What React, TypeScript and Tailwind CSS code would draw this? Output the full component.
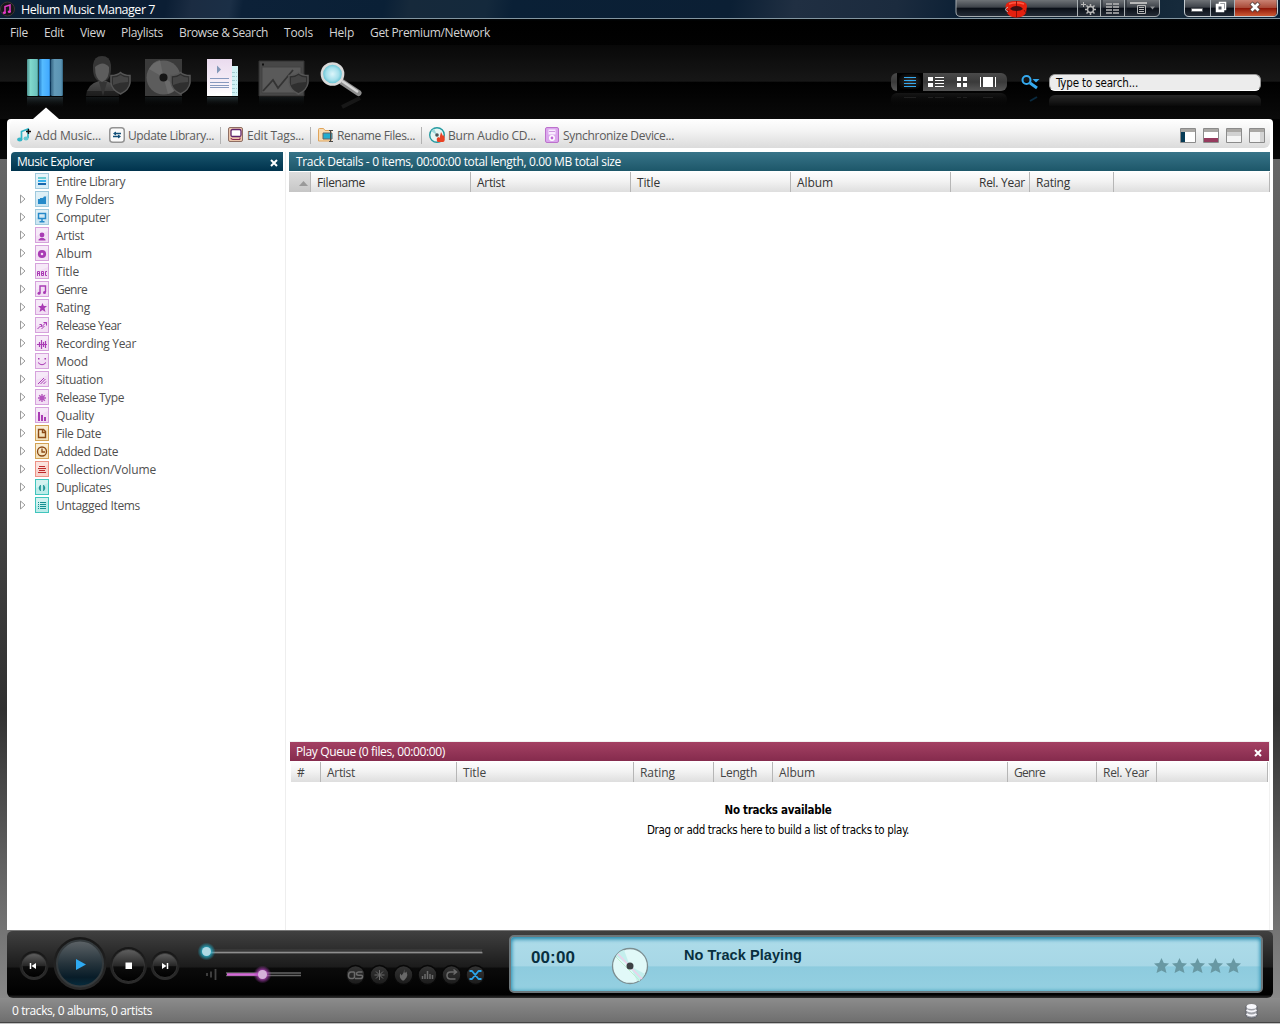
import React, { useLayoutEffect, useRef, useState } from "react";

/** Single-line label whose letter spacing is adjusted to occupy a given width. */
function Fit({ w, children, className = "" }: { w: number; children: string; className?: string }) {
  const ref = useRef<HTMLSpanElement>(null);
  const [ls, setLs] = useState(0);
  useLayoutEffect(() => {
    if (ref.current) {
      const natural = ref.current.getBoundingClientRect().width;
      setLs((w - natural) / children.length);
    }
  }, []);
  return (
    <span ref={ref} className={"inline-block shrink-0 whitespace-nowrap " + className} style={{ letterSpacing: ls }}>
      {children}
    </span>
  );
}

function TitleBar() {
  return (
    <div className="relative flex h-[19px] shrink-0 items-start border-b border-[#8295a0] bg-[linear-gradient(100deg,#0b1f35_0%,#0b1e34_13%,#1b2c42_15%,#1b2f46_18%,#0c2138_19%,#0a2036_30%,#16293b_32%,#14293c_38%,#0a2036_40%,#0b1f34_57%,#202f42_62%,#1b2b3e_70%,#0c2035_75%,#142736_78%,#0a1e30_83%,#162a3b_92%,#0a2036_100%)]">
      <svg width="16" height="18" className="shrink-0">
        <circle cx="7.5" cy="9" r="7.5" fill="#181818" />
        <circle cx="7.5" cy="9" r="7" fill="none" stroke="#3a3a3a" />
        <path d="M5 13V6.500l5-1.500v7" stroke="#e53bc8" strokeWidth="1.500" fill="none" />
        <ellipse cx="4.300" cy="12.800" rx="1.600" ry="1.300" fill="#e53bc8" />
        <ellipse cx="9.300" cy="11.800" rx="1.600" ry="1.300" fill="#e53bc8" />
      </svg>
      <Fit w={134} className="ml-[5px] text-[12.5px] font-medium leading-[20px] text-white">Helium Music Manager 7</Fit>
      <svg width="208" height="19" className="ml-auto">
        <defs>
          <linearGradient id="cap" x1="0" y1="0" x2="0" y2="1">
            <stop offset="0" stopColor="#75797d" />
            <stop offset=".48" stopColor="#3c4148" />
            <stop offset=".5" stopColor="#080d15" />
            <stop offset="1" stopColor="#252d38" />
          </linearGradient>
        </defs>
        <path d="M1 -1V12Q1 16.500 6 16.500H200Q204.500 16.500 204.500 12V-1z" fill="url(#cap)" stroke="#a3aaae" />
        <path d="M122.500 0V16M145.500 0V16M169.500 0V16" stroke="#aab0b3" />
        <path d="M124 0V16M147 0V16M171 0V16" stroke="#222931" />
        <path d="M50.500 6Q51 1 61.500 1Q72 1 72 6L71 13Q68 17.500 61.500 17.500Q55 17.500 52 13z" fill="#e4200f" />
        <path d="M54 4Q61 1.500 69 4" fill="none" stroke="#ff5a44" strokeWidth="1.500" />
        <path d="M55 9Q57 6 61.500 6Q66 6 68 9Q66 11 61.500 11Q57 11 55 9z" fill="#3a1013" />
        <path d="M61.500 1V6M61.500 11v7M54 10l-2 3M69 10l2 3" stroke="#8c1009" strokeWidth="1" />
        <path d="M53 7l-3 2.500 3 2.500" fill="none" stroke="#b9b9b9" />
        <path d="M126 4.500h5M128.500 2v5" stroke="#b8b8b8" />
        <circle cx="135.500" cy="9.500" r="3" fill="none" stroke="#b8b8b8" strokeWidth="1.500" />
        <path d="M135.500 4v2M135.500 13v2M130 9.500h2M139 9.500h2M131.500 5.500l1.500 1.500M139.500 5.500l-1.500 1.500M131.500 13.500l1.500-1.500M139.500 13.500l-1.500-1.500" stroke="#b8b8b8" strokeWidth="1.500" />
        <path d="M151 4h6M158 4h6M151 7h6M158 7h6M151 10h6M158 10h6M151 13h6M158 13h6" stroke="#b8b8b8" strokeWidth="1.500" />
        <path d="M175 3h17" stroke="#b8b8b8" strokeWidth="2" />
        <path d="M182.500 5.500h8v8h-8zM184 7.500h5M184 9.500h5M184 11.500h5" stroke="#b8b8b8" fill="none" />
        <path d="M195 6.500h5l-2.500 3z" fill="#8b8f92" />
      </svg>
      <svg width="97" height="19" className="ml-[20px]">
        <defs>
          <linearGradient id="red" x1="0" y1="0" x2="0" y2="1">
            <stop offset="0" stopColor="#c98273" />
            <stop offset=".48" stopColor="#a94a38" />
            <stop offset=".52" stopColor="#8e1607" />
            <stop offset="1" stopColor="#cc5a35" />
          </linearGradient>
        </defs>
        <path d="M1.500 -1V12Q1.500 16.500 6 16.500H90Q94.500 16.500 94.500 12V-1z" fill="url(#cap)" stroke="#c4cbd0" />
        <path d="M51.500 0H93.500V12Q93.500 16 90 16H51.500z" fill="url(#red)" />
        <path d="M27.500 0V16M51.500 0V16" stroke="#aab2b9" />
        <path d="M8.500 8.500h11v3h-11z" fill="#fff" stroke="#575b60" strokeWidth=".7" />
        <path d="M36.500 2.500h6v7h-6z" fill="#50565f" stroke="#fff" strokeWidth="1.500" />
        <path d="M33.500 4.500h7v7h-7z" fill="#fff" stroke="#fff" strokeWidth="1.500" />
        <path d="M35.500 6.500h3v3h-3z" fill="#50565f" />
        <path d="M68 3l8 8M76 3l-8 8" stroke="#59423e" strokeWidth="4.500" />
        <path d="M68.500 3.500l7 7M75.500 3.500l-7 7" stroke="#fff" strokeWidth="2.700" />
      </svg>
    </div>
  );
}

const menus: [string, number][] = [["File", 18], ["Edit", 20], ["View", 25], ["Playlists", 42], ["Browse & Search", 89], ["Tools", 29], ["Help", 25], ["Get Premium/Network", 120]];

function Shield({ x, y }: { x: number; y: number }) {
  return (
    <g transform={`translate(${x} ${y})`}>
      <path d="M10.500 .5Q14 3.500 20 3.500V11Q19 18 10.500 22Q2 18 1 11V3.500Q7 3.500 10.500 .5z" fill="#2f2f2f" stroke="#565656" strokeWidth="1.500" />
      <path d="M10.500 3Q14 5.500 18 5.500V10Q10 10 3 13V5.500Q7 5.500 10.500 3z" fill="#454545" />
    </g>
  );
}

function MainIcons() {
  return (
    <svg width="370" height="74" className="shrink-0">
      <defs>
        <linearGradient id="b1"><stop offset="0" stopColor="#4c8d8b" /><stop offset=".3" stopColor="#80d9cd" /><stop offset=".85" stopColor="#6cc3bd" /><stop offset="1" stopColor="#2e7777" /></linearGradient>
        <linearGradient id="b2"><stop offset="0" stopColor="#2279c7" /><stop offset=".3" stopColor="#56bcff" /><stop offset=".85" stopColor="#43aaff" /><stop offset="1" stopColor="#1567ad" /></linearGradient>
        <linearGradient id="b3"><stop offset="0" stopColor="#356483" /><stop offset=".3" stopColor="#639ab8" /><stop offset=".85" stopColor="#5b94b4" /><stop offset="1" stopColor="#2e5e7a" /></linearGradient>
        <linearGradient id="fade" x1="0" x2="0" y1="0" y2="1"><stop offset="0" stopColor="#7aa2b0" stopOpacity=".28" /><stop offset="1" stopColor="#000" stopOpacity="0" /></linearGradient>
        <linearGradient id="man" x1="0" x2="0" y1="0" y2="1"><stop offset="0" stopColor="#4d4d4d" /><stop offset=".65" stopColor="#3a3a3a" /><stop offset=".66" stopColor="#232323" /><stop offset="1" stopColor="#1d1d1d" /></linearGradient>
        <linearGradient id="doc" x1="0" x2="0" y1="0" y2="1"><stop offset="0" stopColor="#eadbee" /><stop offset=".6" stopColor="#f5edf7" /><stop offset="1" stopColor="#fff" /></linearGradient>
        <radialGradient id="lens"><stop offset="0" stopColor="#dcf5fa" /><stop offset=".6" stopColor="#a4dfeb" /><stop offset="1" stopColor="#54bccd" /></radialGradient>
      </defs>
      <rect x="27" y="14" width="11.500" height="37" rx="1" fill="url(#b1)" />
      <rect x="39" y="14" width="11.500" height="37" rx="1" fill="url(#b2)" />
      <rect x="51" y="14" width="12" height="37" rx="1" fill="url(#b3)" />
      <rect x="27" y="52" width="36" height="12" fill="url(#fade)" />
      <path d="M86 51Q87 39 99 36L106 36Q118 39 119 51z" fill="url(#man)" />
      <path d="M93 20Q94 11 102 11Q110 11 111 20Q112 36 102 37Q92 36 93 20z" fill="#353535" />
      <path d="M95 22Q103 15 109 22Q110 34 102 37Q95 35 95 22z" fill="#5d5d5d" />
      <path d="M99 37l4 14 4-14z" fill="#343434" />
      <rect x="86" y="52" width="33" height="10" fill="url(#fade)" opacity=".4" />
      <Shield x={110} y={27} />
      <rect x="145" y="14" width="37" height="37" fill="#3a3a3a" />
      <circle cx="163.500" cy="32.500" r="17" fill="#5c5c5c" />
      <path d="M163.500 32.500L149 24Q153 16 160 15zM163.500 32.500L178 42Q174 48 168 49z" fill="#777" opacity=".5" />
      <circle cx="163.500" cy="32.500" r="4" fill="#151515" />
      <rect x="145" y="52" width="37" height="10" fill="url(#fade)" opacity=".4" />
      <Shield x={170} y={27} />
      <path d="M226 21h12v30h-12z" fill="#d1f2f5" />
      <path d="M230 27.500h7M230 31.500h7M230 35.500h7M230 39.500h7M230 43.500h7M230 47.500h7" stroke="#a2cbd1" strokeDasharray="5 1" />
      <path d="M207 14h25v34h-16v3h-9z" fill="url(#doc)" />
      <path d="M216 51v-3h16v3z" fill="#fff" />
      <path d="M217 20.500l4 4-4 4z" fill="#8297b7" />
      <path d="M210 33.500h19M210 37.500h19M210 40.500h19M210 42.500h19" stroke="#8799be" strokeWidth="1.100" />
      <rect x="207" y="52" width="31" height="10" fill="url(#fade)" />
      <path d="M259 16h45v35h-45z" fill="#474747" stroke="#323232" />
      <path d="M262 22h39v26h-39z" fill="#5a5a5a" stroke="#424242" />
      <path d="M263 46l10-11 5 8 15-18" stroke="#333" strokeWidth="1.800" fill="none" />
      <path d="M262 19.500h2" stroke="#111" strokeWidth="2" />
      <rect x="259" y="52" width="45" height="10" fill="url(#fade)" opacity=".4" />
      <Shield x={288} y={27} />
      <path d="M342 37L358.500 48" stroke="#8e8e8e" strokeWidth="6" strokeLinecap="round" />
      <path d="M342 36L358 47" stroke="#d5d5d5" strokeWidth="2.500" />
      <circle cx="332.500" cy="29" r="10.600" fill="url(#lens)" stroke="#dadada" strokeWidth="2.500" />
      <path d="M342 62L360 53" stroke="#333" strokeWidth="4" opacity=".4" />
      <path d="M33 74L46 62.500 59 74z" fill="#fff" />
    </svg>
  );
}

function ViewSwitch() {
  return (
    <svg width="118" height="36" className="shrink-0">
      <defs>
        <linearGradient id="vs" x1="0" x2="0" y1="0" y2="1"><stop offset="0" stopColor="#4a4a4a" /><stop offset=".5" stopColor="#3a3a3a" /><stop offset="1" stopColor="#575757" /></linearGradient>
        <linearGradient id="rf" x1="0" x2="0" y1="0" y2="1"><stop offset="0" stopColor="#292929" /><stop offset="1" stopColor="#090909" stopOpacity="0" /></linearGradient>
        <radialGradient id="seg"><stop offset="0" stopColor="#333" /><stop offset="1" stopColor="#090909" /></radialGradient>
      </defs>
      <rect width="116" height="18" rx="6" fill="url(#vs)" />
      <rect x="6" width="26" height="18" fill="#000" />
      <rect x="8" y="1" width="22" height="15" rx="6" fill="url(#seg)" />
      <path d="M13 4.500h12M13 7.500h12M13 10.500h12M13 13.500h12" stroke="#35a9ee" />
      <path d="M37 4h5v4h-5zM37 10h5v4h-5z" fill="#fff" />
      <path d="M44 4.500h9M44 7.500h9M44 10.500h9M44 13.500h9" stroke="#fff" />
      <path d="M66 4h4v4h-4zM72 4h4v4h-4zM66 10h4v4h-4zM72 10h4v4h-4zM92 4h10v10h-10z" fill="#fff" />
      <path d="M89.500 4v10M104.500 4v10" stroke="#fff" />
      <rect y="20" width="116" height="13" rx="6" fill="url(#rf)" opacity=".5" />
      <path d="M13 24.500h12M37 24.500h5M44 24.500h9M66 24.500h4M72 24.500h4M92 24.500h10" stroke="#202020" />
    </svg>
  );
}

function Header() {
  return (
    <>
      <div className="flex h-[26px] shrink-0 items-center gap-4 bg-[linear-gradient(#020507,#000_10%,#020202)] pl-[10px] pt-[2px] text-[12px] leading-[24px] text-[#d4d4d4]">
        {menus.map(([m, w]) => <Fit key={m} w={w}>{m}</Fit>)}
      </div>
      <div className="flex h-[74px] shrink-0 items-start bg-[linear-gradient(#080808,#171717_49%,#000_50%,#0a0a0a)]">
        <MainIcons />
        <div className="ml-auto mr-[19px] flex items-start pt-[28px]">
          <ViewSwitch />
          <svg width="20" height="32" className="ml-[12px]">
            <circle cx="5.500" cy="7" r="4" fill="none" stroke="#35a9ee" strokeWidth="2" />
            <path d="M9 10l7 5" stroke="#35a9ee" strokeWidth="3" />
            <path d="M11.500 6h7l-3.500 3.500z" fill="#35a9ee" />
            <path d="M9 28l7-4" stroke="#0a2b40" strokeWidth="2" />
          </svg>
          <div className="ml-[8px]">
            <div className="mt-px flex h-[17px] w-[212px] items-center rounded-[6px] border border-[#999] border-b-white bg-[#ececec] pl-[6px] pt-px font-['DejaVu_Sans_Condensed','DejaVu_Sans',sans-serif] text-[11.5px] leading-[14px] text-[#050505]">
              <Fit w={82}>Type to search...</Fit>
            </div>
            <div className="mt-[4px] h-[11px] rounded-t-[6px] bg-[linear-gradient(#292929,#090909)]" />
          </div>
        </div>
      </div>
    </>
  );
}

function Divider() {
  return <div className="h-[17px] w-px bg-[#b2b2b2]" />;
}

function LayoutIcon({ kind }: { kind: number }) {
  return (
    <svg width="16" height="15">
      <path d="M.5.5h15v14H.5z" fill={kind < 2 ? "#fff" : "#f5f5f5"} stroke="#8b8b8b" />
      <path d="M1 1h14v3H1z" fill="#aaa8a5" />
      {kind === 0 && <path d="M1 4h4v10H1z" fill="#063b56" />}
      {kind === 1 && <path d="M1 10h14v4H1z" fill="#963b5e" />}
      {kind === 2 && <path d="M1 4h14v4H1z" fill="#d1d1d1" />}
      {kind === 3 && <path d="M11 4h4v10h-4z" fill="#d4d4d4" />}
    </svg>
  );
}

function Toolbar() {
  return (
    <div className="mx-[3px] flex h-[29px] shrink-0 items-center rounded-[6px] bg-[linear-gradient(#fff,#f4f4f4_40%,#dbdbdb)] pl-[6px] pt-[3px] text-[12px] text-[#5b5b5b]">
      <svg width="16" height="16">
        <path d="M5.500 12V4.500L12 2v9" stroke="#32b5c7" strokeWidth="1.700" fill="none" />
        <ellipse cx="3.800" cy="12.500" rx="2.700" ry="2" fill="#32b5c7" /><ellipse cx="10" cy="11.500" rx="2.500" ry="2" fill="#65c9d3" />
        <path d="M10 4.500h5M12.500 2v5" stroke="#111" strokeWidth="1.400" />
      </svg>
      <Fit w={66} className="ml-[3px] pt-[2px]">Add Music...</Fit>
      <svg width="16" height="16" className="ml-[8px]">
        <rect x=".75" y=".75" width="14.500" height="14.500" rx="3" fill="#fafafa" stroke="#949494" strokeWidth="1.500" />
        <path d="M5 6.500h7M4 9.500h7" stroke="#145179" strokeWidth="1.300" /><path d="M4 6.500L7 4.500v4zM12 9.500L9 7.500v4z" fill="#145179" />
      </svg>
      <Fit w={86} className="ml-[3px] pt-[2px]">Update Library...</Fit>
      <div className="ml-[6px]"><Divider /></div>
      <svg width="16" height="16" className="ml-[7px]">
        <rect x=".5" y=".5" width="14" height="14" rx="1.500" fill="#ecc6ac" stroke="#8e6e63" />
        <rect x="3" y="2.500" width="10" height="7" rx="1.500" fill="#fff" stroke="#5f246c" strokeWidth="1.300" />
        <path d="M3 11q0 1.500 2 1.500h7v-2" fill="none" stroke="#8b2753" />
      </svg>
      <Fit w={57} className="ml-[3px] pt-[2px]">Edit Tags...</Fit>
      <div className="ml-[6px]"><Divider /></div>
      <svg width="16" height="16" className="ml-[7px]">
        <path d="M.5 14V2.500q0-1 1-1h4l1.500 2h6v10.500z" fill="#f7ddb5" stroke="#e1a45a" />
        <path d="M5 6h9v6H5z" fill="#22add0" stroke="#646464" /><path d="M12.500 4v10M11 3.500h4M11 14.500h4" stroke="#494949" />
      </svg>
      <Fit w={78} className="ml-[3px] pt-[2px]">Rename Files...</Fit>
      <div className="ml-[6px]"><Divider /></div>
      <svg width="17" height="16" className="ml-[7px]">
        <circle cx="8" cy="8" r="7.300" fill="#e6f6f4" stroke="#249aa0" strokeWidth="1.400" />
        <path d="M8 8L2 4l3-2.500zM8 8l6-3" fill="#9dd8db" /><circle cx="8" cy="8" r="1.800" fill="#48575a" />
        <path d="M8.500 15q-2-4 1-5l1 1 1.500-6 2 4 1-1q2 7-1 7z" fill="#e94224" />
      </svg>
      <Fit w={88} className="ml-[2px] pt-[2px]">Burn Audio CD...</Fit>
      <svg width="14" height="16" className="ml-[9px]">
        <rect x=".5" y=".5" width="13" height="15" rx="1.500" fill="#dba7ed" stroke="#bc71cc" />
        <path d="M3.500 2.500h7v5h-7z" fill="#f9edff" /><path d="M4 4.500h6" stroke="#d09be0" /><circle cx="7" cy="11" r="2.200" fill="#c16bd7" stroke="#fff" strokeWidth="1.600" />
      </svg>
      <Fit w={111} className="ml-[4px] pt-[2px]">Synchronize Device...</Fit>
      <div className="ml-auto mr-[5px] flex gap-[7px]">
        {[0, 1, 2, 3].map((k) => <LayoutIcon key={k} kind={k} />)}
      </div>
    </div>
  );
}

const C = { b: "#2589c9", p: "#a93bb4", o: "#8c4a15", r: "#bf2a2c", t: "#168f91" };
const glyphs: Record<string, React.ReactNode> = {
  "Entire Library": <><path d="M3 4h8" stroke="#6bcdd5" strokeWidth="2" /><path d="M3 7h8" stroke="#37b1ed" strokeWidth="2" /><path d="M3 10h8" stroke="#1768ae" strokeWidth="2" /></>,
  "My Folders": <path d="M3 12V7h2V6h3l1-1.500h2V12z" fill={C.b} />,
  Computer: <><path d="M3.500 3.500h7v5h-7z" fill="none" stroke={C.b} strokeWidth="1.500" /><path d="M7 9v3M4.500 11.800h5" stroke={C.b} strokeWidth="1.500" /></>,
  Artist: <><circle cx="7" cy="7" r="2.400" fill={C.p} /><path d="M3.500 12.500V11.500l2-1.500h3l2 1.500v1z" fill={C.p} /></>,
  Album: <circle cx="7" cy="8" r="2.700" fill="none" stroke={C.p} strokeWidth="2.800" />,
  Title: <path d="M2.500 12V7.500h2V12M2.500 9.500h2M6.500 7.500v4h2v-4zM6.500 9.500h2M12 7.500h-1.500v4H12" fill="none" stroke={C.p} />,
  Genre: <><path d="M5 11V4h5.500v6" fill="none" stroke={C.p} strokeWidth="1.400" /><circle cx="4" cy="11.200" r="1.500" fill={C.p} /><circle cx="9.500" cy="10.500" r="1.500" fill={C.p} /></>,
  Rating: <path d="M7.500 3l1.300 3H12L9.500 8.300l1 3.700-3-2-3 2 1-3.700L3 6h3.200z" fill={C.p} />,
  "Release Year": <path d="M2.500 11l3-3 1 1 5-5M8.500 4.500h3v3M4.500 6.500h2v2M6.500 11l3-3" fill="none" stroke={C.p} />,
  "Recording Year": <path d="M2 8.500h10M4.500 6v5M6.500 4v9M8.500 6v5M10.500 5v7" stroke={C.p} strokeWidth="1.200" />,
  Mood: <><path d="M3 4h1.500v1.500H3zM9.500 4H11v1.500H9.500z" fill={C.p} /><path d="M3 8.500q4 4.500 8 0" fill="none" stroke={C.p} /></>,
  Situation: <path d="M3 12l6-6M5.500 12l5-5M8.500 12l2.500-2.500" stroke={C.p} />,
  "Release Type": <path d="M7 4v8M3 8h8M4.200 5.200l5.600 5.600M9.800 5.200l-5.600 5.600" stroke={C.p} strokeWidth="1.400" opacity=".85" />,
  Quality: <path d="M4 4v9M7 7v6M10 9v4" stroke={C.p} strokeWidth="2" />,
  "File Date": <path d="M3.500 3.500h5l2 2v6h-7zM7.500 4v2.500h3" fill="none" stroke={C.o} strokeWidth="1.400" />,
  "Added Date": <><circle cx="7" cy="7.500" r="4.500" fill="none" stroke={C.o} strokeWidth="1.300" /><path d="M7 4.500v3.500h3" fill="none" stroke={C.o} strokeWidth="1.300" /></>,
  "Collection/Volume": <path d="M4 4.500h6M3 6.500h8M4 8.500h6M3 10.500h8" stroke={C.r} />,
  Duplicates: <path d="M5.500 5q-3 3 0 6V5zM8.500 5q3 3 0 6V5z" fill={C.t} stroke={C.t} strokeWidth=".6" />,
  "Untagged Items": <path d="M3 4.500h1M5 4.500h6M3 6.500h1M5 6.500h6M3 8.500h1M5 8.500h6M3 10.500h1M5 10.500h6" stroke={C.t} />,
};
const tree: [string, number, string, string][] = [
  ["Entire Library", 69, "#d7edf7", "#9fc9dd"], ["My Folders", 58, "#cce6f2", "#9fc9dd"], ["Computer", 54, "#cce6f2", "#9fc9dd"],
  ["Artist", 28, "#f2def4", "#d6a2dc"], ["Album", 36, "#f2def4", "#d6a2dc"], ["Title", 23, "#f2def4", "#d6a2dc"], ["Genre", 31, "#f2def4", "#d6a2dc"],
  ["Rating", 34, "#f2def4", "#d6a2dc"], ["Release Year", 65, "#f2def4", "#d6a2dc"], ["Recording Year", 80, "#f2def4", "#d6a2dc"], ["Mood", 32, "#f2def4", "#d6a2dc"],
  ["Situation", 47, "#f2def4", "#d6a2dc"], ["Release Type", 68, "#f2def4", "#d6a2dc"], ["Quality", 38, "#f2def4", "#d6a2dc"],
  ["File Date", 45, "#f4e3bd", "#d2a255"], ["Added Date", 62, "#f4e3bd", "#d2a255"], ["Collection/Volume", 100, "#f9d3cc", "#ed9286"],
  ["Duplicates", 55, "#bcece9", "#41c5bd"], ["Untagged Items", 84, "#bcece9", "#41c5bd"],
];

function Close() {
  return <svg width="8" height="8" className="ml-auto mr-[5px] mt-[2px]"><path d="M1 1l6 6M7 1L1 7" stroke="#fff" strokeWidth="2" /></svg>;
}

function Sidebar() {
  return (
    <div className="mr-[3px] w-[275px] shrink-0 border-r border-[#eee]">
      <div className="flex h-[19px] w-[272px] items-center rounded-tl-[4px] bg-[linear-gradient(#1a566e,#00334d)] pl-[6px] text-[12px] text-white">
        <Fit w={77}>Music Explorer</Fit><Close />
      </div>
      <div className="pl-[9px] pt-px">
        {tree.map(([name, w, bg, border], i) => (
          <div key={name} className="flex h-[18px] items-center text-[12px] leading-[18px] text-[#4f4f4f]">
            <svg width="7" height="10" className="mr-[8px] -mt-px">{i > 0 && <path d="M.5 1v8l4.500-4z" fill="#fff" stroke="#9b9b9b" />}</svg>
            <svg width="14" height="16" className="mr-[7px]">
              <rect x=".5" y=".5" width="13" height="15" fill={bg} stroke={border} />
              <path d="M1 1h12v3L1 9z" fill="#fff" opacity=".35" />
              <g transform="translate(0 1)">{glyphs[name]}</g>
            </svg>
            <Fit w={w} className="pt-px leading-[17px]">{name}</Fit>
          </div>
        ))}
      </div>
    </div>
  );
}

type Col = { t: string; fit: number; w: string; right?: boolean };
const trackCols: Col[] = [
  { t: "Filename", fit: 48, w: "w-[160px]" }, { t: "Artist", fit: 28, w: "w-[160px]" }, { t: "Title", fit: 23, w: "w-[160px]" },
  { t: "Album", fit: 36, w: "w-[160px]" }, { t: "Rel. Year", fit: 46, w: "w-[79px]", right: true }, { t: "Rating", fit: 34, w: "w-[84px]" },
];
const queueCols: Col[] = [
  { t: "#", fit: 7, w: "w-[30px]" }, { t: "Artist", fit: 28, w: "w-[136px]" }, { t: "Title", fit: 23, w: "w-[177px]" }, { t: "Rating", fit: 35, w: "w-[80px]" },
  { t: "Length", fit: 37, w: "w-[59px]" }, { t: "Album", fit: 36, w: "w-[235px]" }, { t: "Genre", fit: 31, w: "w-[89px]" }, { t: "Rel. Year", fit: 46, w: "w-[60px]" },
];

function Columns({ cols }: { cols: Col[] }) {
  return (
    <>
      {cols.map((c) => (
        <div key={c.t} className={"box-border flex h-full items-center border-r border-[#b6b6b6] " + c.w + (c.right ? " justify-end pr-[4px]" : " pl-[6px]")}>
          <Fit w={c.fit} className="pt-px">{c.t}</Fit>
        </div>
      ))}
      <div className="h-full flex-1 border-r border-[#b6b6b6]" />
    </>
  );
}

function Main() {
  return (
    <div className="flex min-w-0 flex-1 flex-col text-[12px]">
      <div className="flex h-[19px] shrink-0 items-center bg-[linear-gradient(#387489,#1d5769)] pl-[7px] text-white">
        <Fit w={325}>Track Details - 0 items, 00:00:00 total length, 0.00 MB total size</Fit>
      </div>
      <div className="mt-px flex h-[20px] shrink-0 items-stretch bg-[linear-gradient(#fdfdfd,#f3f3f3_45%,#dedede)] text-[#333]">
        <div className="flex w-[22px] items-end justify-end border-r border-[#b6b6b6] bg-[linear-gradient(#ddd,#c6c6c6)] pb-[6px] pr-[2px]">
          <svg width="9" height="5"><path d="M0 5L4.500 0 9 5z" fill="#999" /></svg>
        </div>
        <Columns cols={trackCols} />
      </div>
      <div className="flex-1" />
      <div className="border-l border-r border-t border-l-transparent border-[#f1f1f1]">
        <div className="flex h-[19px] items-center bg-[linear-gradient(#a44163,#852b4d)] pl-[6px] pr-[2px] text-white">
          <Fit w={149}>Play Queue (0 files, 00:00:00)</Fit><Close />
        </div>
        <div className="ml-[1px] mr-px mt-px flex h-[20px] items-stretch bg-[linear-gradient(#fdfdfd,#f3f3f3_45%,#dedede)] text-[#444]">
          <Columns cols={queueCols} />
        </div>
        <div className="flex h-[148px] flex-col items-center pr-[3px] pt-[18px] font-['DejaVu_Sans_Condensed','DejaVu_Sans',sans-serif] text-[11.5px] leading-[20px] text-black">
          <Fit w={107} className="font-bold">No tracks available</Fit>
          <Fit w={262}>Drag or add tracks here to build a list of tracks to play.</Fit>
        </div>
      </div>
    </div>
  );
}

function Controls() {
  return (
    <svg width="490" height="67" className="shrink-0">
      <defs>
        <linearGradient id="btn" x1="0" x2="0" y1="0" y2="1"><stop offset="0" stopColor="#606060" /><stop offset=".5" stopColor="#282828" /><stop offset=".55" stopColor="#0c0c0c" /><stop offset="1" stopColor="#000" /></linearGradient>
        <linearGradient id="ring" x1="0" x2="0" y1="0" y2="1"><stop offset="0" stopColor="#171717" /><stop offset="1" stopColor="#2c2c2c" /></linearGradient>
        <linearGradient id="pl" x1="0" x2="0" y1="0" y2="1"><stop offset="0" stopColor="#5e6468" /><stop offset=".5" stopColor="#26343c" /><stop offset=".8" stopColor="#081c28" /><stop offset="1" stopColor="#062c3e" /></linearGradient>
        <radialGradient id="tg"><stop offset=".35" stopColor="#27bfdc" /><stop offset="1" stopColor="#1baac5" stopOpacity="0" /></radialGradient>
        <radialGradient id="pg"><stop offset=".35" stopColor="#c44fcb" /><stop offset="1" stopColor="#a63db1" stopOpacity="0" /></radialGradient>
        <linearGradient id="sm" x1="0" x2="0" y1="0" y2="1"><stop offset="0" stopColor="#343434" /><stop offset="1" stopColor="#1b1b1b" /></linearGradient>
      </defs>
      {[[27, 34.500, 14.500], [121.500, 34.500, 18.500], [158, 34.500, 14.500]].map(([x, y, r]) => (
        <g key={x}>
          <circle cx={x} cy={y} r={r} fill="url(#ring)" />
          <circle cx={x} cy={y} r={r - 2.500} fill="url(#btn)" stroke="#3c3c3c" strokeWidth=".7" />
        </g>
      ))}
      <circle cx="73" cy="32.500" r="26.500" fill="url(#ring)" />
      <circle cx="73" cy="32.500" r="23" fill="url(#pl)" stroke="#343a3d" strokeWidth="2" />
      <path d="M69 28l10 5.500-10 5.500z" fill="#2eaaf2" />
      <path d="M23.500 32v6" stroke="#fff" strokeWidth="1.500" /><path d="M29 32v6l-4.500-3z" fill="#fff" />
      <path d="M118.500 31.500h6.500v6.500h-6.500z" fill="#fff" />
      <path d="M160.500 32v6" stroke="#fff" strokeWidth="1.500" /><path d="M155 32v6l4.500-3z" fill="#fff" />
      <rect x="197" y="18" width="279" height="5" rx="2" fill="#111" />
      <path d="M198 19h277.500" stroke="#606060" /><path d="M198 21.500h277.500" stroke="#8e8e8e" strokeWidth="2" />
      <circle cx="199.500" cy="20.500" r="9" fill="url(#tg)" /><circle cx="199.500" cy="20.500" r="4.500" fill="#afd9e4" />
      <path d="M200 42v3M204 40.500v6M208.500 38v11" stroke="#444" strokeWidth="1.800" />
      <path d="M219 42h75M219 44.500h75" stroke="#666" strokeWidth="1.300" /><path d="M220 43.500h35" stroke="#d469d7" strokeWidth="2.500" />
      <circle cx="255.500" cy="43.500" r="9" fill="url(#pg)" /><circle cx="255.500" cy="43.500" r="4.500" fill="#d5b1d8" />
      {[348.500, 372.500, 396.500, 420.500, 444.500, 468.500].map((x) => <circle key={x} cx={x} cy="44" r="9.500" fill="url(#sm)" stroke="#080808" strokeWidth="1.500" />)}
      <g fill="none" stroke="#6b6b6b" strokeWidth="1.500">
        <path d="M347.500 41h-3.500q-2.500 0-2.500 3.300t2.500 3.200h1.500q2 0 2-2v-4.500M348 47.500h5q2.500 0 2.500-1.800t-2.500-1.500h-1.500q-2 0-2-1.500t2-1.700h4" />
        <path d="M372.500 39v10M367.500 44h10M369 40.500l7 7M376 40.500l-7 7" strokeWidth="1" />
        <path d="M415.500 48v-3M418 48v-5M420.500 48v-8M423 48v-5M425.500 48v-4" strokeWidth="1.500" />
        <path d="M449 41h-5.500q-3.500 0-3.500 3.500t3.500 3.500h5M446.500 38.500l3 2.500-3 2.500" />
      </g>
      <path d="M397.500 38q-.5 3 .5 4l1.500-1.500q1.500 3 0 6L397 49.500h-1.500q-3.500-2.500-2.500-6l.5-1 1 2q2.500-2.500 3-6.500z" fill="#686868" />
      <path d="M462.500 40h2.500l6.500 8h3M462.500 48h2.500l6.500-8h3" fill="none" stroke="#2aa4e8" strokeWidth="1.900" strokeLinejoin="round" />
    </svg>
  );
}

function Player() {
  return (
    <div className="mx-[7px] flex h-[68px] shrink-0 rounded-[6px] border-t border-[#777] bg-[linear-gradient(#404040,#1b1b1b_54%,#0b0b0b_55%,#000_95%,#333)]">
      <Controls />
      <div className="ml-[12px] mt-[4px] flex h-[58px] w-[754px] items-start rounded-[5px] border-2 border-[#6d777b] bg-[linear-gradient(#addce9,#a7d7e6_54%,#8dcbde_55%,#95d0e1)] font-['Liberation_Sans',sans-serif] font-bold text-[#082f3f] shadow-[inset_0_2px_4px_#2589ad,inset_0_0_4px_#4ca7c2]">
        <Fit w={44} className="ml-[20px] mt-[9px] text-[17px] leading-[24px]">00:00</Fit>
        <svg width="38" height="38" className="ml-[36px] mt-[10px]">
          <circle cx="19" cy="19" r="17.500" fill="#e1f9f8" stroke="#7c8e91" strokeWidth="1.300" />
          <path d="M19 19L5 9Q8 4 13 3zM19 19L34 27Q31 33 26 34z" fill="#c4efed" />
          <path d="M7 7l24 25" stroke="#eed0e9" strokeWidth="1.500" /><path d="M5 10l24 24" stroke="#bdf0cf" />
          <circle cx="19" cy="19" r="3.500" fill="#3c4144" />
        </svg>
        <Fit w={118} className="ml-[35px] mt-[7px] text-[14.5px] leading-[22px]">No Track Playing</Fit>
        <svg width="90" height="18" className="ml-auto mr-[18px] mt-[20px]">
          {[0, 1, 2, 3, 4].map((i) => <path key={i} transform={`translate(${i * 18} 0)`} d="M8.500 1l2.300 5 5.200.5-4 3.500 1.500 6-5-2.500-5 2.500 1.500-6-4-3.500 5.200-.5z" fill="#6898a3" />)}
        </svg>
      </div>
    </div>
  );
}

export default function App() {
  return (
    <div className="flex h-[1024px] w-[1280px] flex-col overflow-hidden bg-[#777] font-['Open_Sans','Noto_Sans',sans-serif]">
      <TitleBar />
      <Header />
      <div className="flex min-h-0 flex-1 flex-col bg-[linear-gradient(#000_0,#080808_40px,#666_40px,#606060_100px,#303030_590px,#686868_770px,#8c8c8c_890px)]">
        <div className="mx-[7px] flex min-h-0 flex-1 flex-col rounded-t-[4px] bg-white">
          <Toolbar />
          <div className="flex min-h-0 flex-1 pb-0 pl-[4px] pr-[3px] pt-[4px]">
            <Sidebar />
            <Main />
          </div>
        </div>
        <Player />
        <div className="flex h-[26px] shrink-0 items-center border-b border-[#c0c0c0] bg-[linear-gradient(#8c8c8c,#6f6f6f_94%,#444_95%)] pl-[12px] text-[12px] text-white">
          <Fit w={140} className="pt-px">0 tracks, 0 albums, 0 artists</Fit>
          <svg width="13" height="16" className="ml-auto mr-[22px]">
            <path d="M1 3v9q0 3 5.500 3t5.500-3V3z" fill="#9fa1a8" stroke="#60626a" />
            <ellipse cx="6.500" cy="3.500" rx="5" ry="2.500" fill="#f8f8fc" />
            <path d="M1.500 7q5 3 10 0M1.500 11q5 3 10 0" fill="none" stroke="#f5f5fa" strokeWidth="2" />
          </svg>
        </div>
      </div>
    </div>
  );
}
